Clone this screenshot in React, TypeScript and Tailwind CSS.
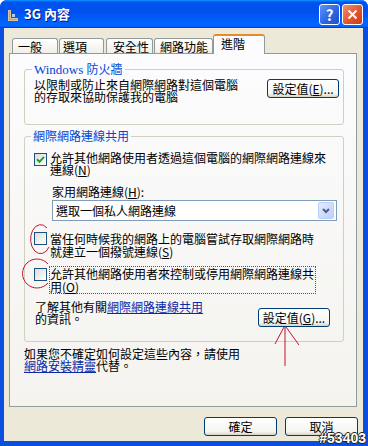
import React from "react";

const cjk = "font-['Noto_Sans_CJK_TC',sans-serif]";

const Box = ({ checked }: { checked?: boolean }) => (
  <span className="flex h-[13px] w-[13px] shrink-0 items-center justify-center border border-[#1c5180] bg-[linear-gradient(135deg,#dcdcd7,#ffffff)]">
    {checked && (
      <svg width="9" height="9" viewBox="0 0 9 9">
        <path d="M1 4.2 L3.5 6.8 L8 1.8" stroke="#21a121" strokeWidth="2" fill="none" />
      </svg>
    )}
  </span>
);

const XPButton = ({ children, className = "" }: { children: React.ReactNode; className?: string }) => (
  <div
    className={
      "flex h-[19px] items-center justify-center rounded-[3px] border border-[#003c74] bg-[linear-gradient(#ffffff,#f4f4f0_80%,#d8d2c6)] text-[12px] leading-[12px] text-black " +
      className
    }
  >
    {children}
  </div>
);

const U = ({ c }: { c: string }) => <span className="underline">{c}</span>;

// one line of text, fixed height so lines stack like the dialog font
const Line = ({ children, h = "h-[12px] leading-[12px]" }: { children: React.ReactNode; h?: string }) => (
  <div className={"whitespace-nowrap " + h}>{children}</div>
);

const tabs = [
  { t: "一般", w: "w-[46px] mr-[1px] pl-[5px]" },
  { t: "選項", w: "w-[45px] mr-[2px] pl-[3px]" },
  { t: "安全性", w: "w-[47px] mr-[1px] pl-[6px]" },
  { t: "網路功能", w: "w-[59px] pl-[5px]" },
];

export default function App() {
  return (
    <div className={`relative flex h-[446px] w-[368px] flex-col overflow-hidden rounded-t-[7px] bg-[#0b4fe0] ${cjk}`}>
      {/* title bar */}
      <div className="flex h-[28px] shrink-0 items-center bg-[linear-gradient(180deg,#0997ff,#0053ee_8%,#0050ee_40%,#0066ff_88%,#0066ff_93%,#005bff_95%,#003dd7_96%,#003dd7)] pl-[6px] pr-[5px]">
        <svg width="14" height="14" viewBox="0 0 14 14" className="mt-[2px]">
          <path d="M2 2 L5 2 L5 10 L12 10 L12 13 L2 13 Z" fill="#d9c89c" />
          <path d="M3 3 L4 3 L4 11 L11 11 L11 12 L3 12 Z" fill="#8aa7d8" />
          <rect x="6" y="6" width="3" height="3" fill="#ffffff" opacity="0.7" />
        </svg>
        <span className="ml-[4px] text-[13px] font-bold leading-[14px] text-white [text-shadow:1px_1px_#0f1089]">3G 內容</span>
        <div className="ml-auto flex gap-[2px]">
          <div className="flex h-[21px] w-[21px] items-center justify-center rounded-[3px] border border-white bg-[linear-gradient(135deg,#5e94f8,#2a62e2_60%,#1c50cf)] text-[15px] font-bold leading-none text-white">
            ?
          </div>
          <div className="flex h-[21px] w-[21px] items-center justify-center rounded-[3px] border border-white bg-[linear-gradient(135deg,#f09272,#e0562e_55%,#c83c1c)]">
            <svg width="11" height="11" viewBox="0 0 11 11">
              <path d="M1.5 1.5 L9.5 9.5 M9.5 1.5 L1.5 9.5" stroke="#fff" strokeWidth="2" />
            </svg>
          </div>
        </div>
      </div>

      {/* body */}
      <div className="ml-[4px] mr-[5px] flex h-[413px] flex-col bg-[#ece9d8] pl-[5px] pt-[6px] text-[12px] leading-[12px] text-black">
        {/* tabs */}
        <div className="flex h-[19px] items-end pl-[3px]">
          {tabs.map((tb) => (
            <div
              key={tb.t}
              className={`h-[15px] rounded-t-[3px] border-x border-t border-[#919b9c] bg-[linear-gradient(#ffffff,#f0efe8)] pt-[1px] leading-[13px] ${tb.w}`}
            >
              {tb.t}
            </div>
          ))}
          <div className="relative z-10 -mb-[1px] h-[20px] w-[52px] rounded-t-[3px] border-x border-t-[2px] border-x-[#919b9c] border-t-[#e68b2c] bg-[#fcfcfe] pl-[7px] pt-[1px] leading-[13px]">
            進階
          </div>
        </div>

        {/* panel */}
        <div className="flex h-[354px] w-[348px] flex-col border border-[#919b9c] bg-[linear-gradient(#fcfcfe,#f4f3ee)]">
          <fieldset className="ml-[14px] mt-[8px] w-[320px] rounded-[3px] border border-[#d0d0bf]">
            <legend className="ml-[7px] px-[2px] font-['Liberation_Serif','Noto_Sans_CJK_TC',serif] text-[13px] leading-[14px] text-[#0046d5]">
              Windows <span className={cjk + " text-[12px]"}>防火牆</span>
            </legend>
            <div className="flex h-[47px] items-start justify-between pl-[9px] pr-[4px] pt-[2px]">
              <div>
                <Line>以限制或防止來自網際網路對這個電腦</Line>
                <Line>的存取來協助保護我的電腦</Line>
              </div>
              <XPButton className="w-[72px]">
                設定值(<U c="E" />)...
              </XPButton>
            </div>
          </fieldset>

          <fieldset className="ml-[14px] mt-[4px] w-[320px] rounded-[3px] border border-[#d0d0bf]">
            <legend className="ml-[6px] px-[2px] leading-[14px] text-[#0046d5]">網際網路連線共用</legend>
            <div className="flex h-[198px] flex-col">
              <div className="ml-[9px] mt-[9px] flex items-start gap-[3px]">
                <div className="mt-[1px]">
                  <Box checked />
                </div>
                <div>
                  <Line>允許其他網路使用者透過這個電腦的網際網路連線來</Line>
                  <Line>
                    連線(<U c="N" />)
                  </Line>
                </div>
              </div>
              <div className="ml-[27px] mt-[10px]">
                <Line>
                  家用網路連線(<U c="H" />):
                </Line>
              </div>
              <div className="ml-[27px] mt-[2px] flex h-[21px] w-[285px] items-center border border-[#7f9db9] bg-white pl-[3px] pr-[2px]">
                <span className="leading-[12px]">選取一個私人網路連線</span>
                <div className="ml-auto flex h-[17px] w-[16px] items-center justify-center rounded-[2px] border border-[#b9d1fa] bg-[linear-gradient(135deg,#e4ecfd,#bcd0fa)]">
                  <svg width="8" height="6" viewBox="0 0 8 6">
                    <path d="M1 1 L4 4 L7 1" stroke="#4d6185" strokeWidth="2" fill="none" />
                  </svg>
                </div>
              </div>
              <div className="ml-[9px] mt-[11px] flex items-start gap-[3px]">
                <Box />
                <div>
                  <Line h="h-[13px] leading-[13px]">當任何時候我的網路上的電腦嘗試存取網際網路時</Line>
                  <Line h="h-[13px] leading-[13px]">
                    就建立一個撥號連線(<U c="S" />)
                  </Line>
                </div>
              </div>
              <div className="ml-[9px] mt-[8px] flex items-start gap-[2px]">
                <div className="mt-[2px]">
                  <Box />
                </div>
                <div className="w-[267px] border border-dotted border-[#555]">
                  <Line h="h-[13px] leading-[13px]">允許其他網路使用者來控制或停用網際網路連線共</Line>
                  <Line h="h-[13px] leading-[13px]">
                    用(<U c="O" />)
                  </Line>
                </div>
              </div>
              <div className="ml-[10px] mr-[13px] mt-[7px] flex items-start justify-between">
                <div>
                  <Line>
                    了解其他有關<span className="text-[#0b2aa8] underline">網際網路連線共用</span>
                  </Line>
                  <Line>的資訊。</Line>
                </div>
                <XPButton className="mt-[7px] w-[72px]">
                  設定值(<U c="G" />)...
                </XPButton>
              </div>
            </div>
          </fieldset>

          <div className="ml-[14px] mt-[6px]">
            <Line>如果您不確定如何設定這些內容，請使用</Line>
            <Line>
              <span className="text-[#0b2aa8] underline">網路安裝精靈</span>代替。
            </Line>
          </div>
        </div>

        {/* buttons */}
        <div className="mt-[10px] flex justify-end gap-[8px] pr-[5px]">
          <XPButton className="w-[73px]">確定</XPButton>
          <XPButton className="w-[73px]">取消</XPButton>
        </div>
      </div>

      {/* annotations */}
      <svg className="pointer-events-none absolute left-0 top-0" width="368" height="446">
        <path d="M47 228 A10 14.5 0 1 0 49 247" stroke="#c8102e" strokeWidth="1" fill="none" />
        <path d="M48 264 A14.5 14.5 0 1 0 48 283" stroke="#c8102e" strokeWidth="1" fill="none" />
        <path d="M285 327 L285 366 M284 327 L275 344 M286 327 L299 345" stroke="#c8102e" strokeWidth="1" fill="none" />
      </svg>
      <div className="absolute bottom-[0px] right-[2px] font-['Liberation_Sans',sans-serif] text-[14px] font-bold leading-[15px] text-white [text-shadow:1px_0_#222,-1px_0_#222,0_1px_#222,0_-1px_#222]">
        #53403
      </div>
    </div>
  );
}
